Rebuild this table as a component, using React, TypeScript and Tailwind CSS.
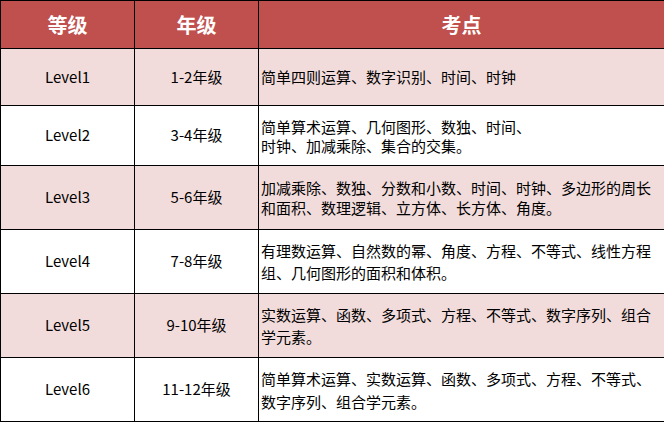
const rows = [
  { level: 'Level1', grade: '1-2年级', points: ['简单四则运算、数字识别、时间、时钟'], h: 'h-[57px]', bg: 'bg-[#f2dcdb]', lh: 'leading-[20px]' },
  { level: 'Level2', grade: '3-4年级', points: ['简单算术运算、几何图形、数独、时间、', '时钟、加减乘除、集合的交集。'], h: 'h-[60px]', bg: 'bg-white', lh: 'leading-[19px]' },
  { level: 'Level3', grade: '5-6年级', points: ['加减乘除、数独、分数和小数、时间、时钟、多边形的周长和面积、数理逻辑、立方体、长方体、角度。'], h: 'h-[64px]', bg: 'bg-[#f2dcdb]', lh: 'leading-[20px]' },
  { level: 'Level4', grade: '7-8年级', points: ['有理数运算、自然数的幂、角度、方程、不等式、线性方程组、几何图形的面积和体积。'], h: 'h-[64px]', bg: 'bg-white', lh: 'leading-[22px]' },
  { level: 'Level5', grade: '9-10年级', points: ['实数运算、函数、多项式、方程、不等式、数字序列、组合学元素。'], h: 'h-[64px]', bg: 'bg-[#f2dcdb]', lh: 'leading-[22px]' },
  { level: 'Level6', grade: '11-12年级', points: ['简单算术运算、实数运算、函数、多项式、方程、不等式、数字序列、组合学元素。'], h: 'h-[64px]', bg: 'bg-white', lh: 'leading-[23px]' },
];

const App = () => {
  return (
    <div
      className="w-[664px] h-[422px] bg-white text-black"
      style={{ fontFamily: '"Noto Sans CJK SC", "Noto Sans", sans-serif' }}
    >
      <table className="w-[664px] table-fixed border-collapse">
        <colgroup>
          <col className="w-[134px]" />
          <col className="w-[124px]" />
          <col className="w-[406px]" />
        </colgroup>
        <thead>
          <tr className="h-[48px] bg-[#c0504d] text-white">
            <th className="border border-black text-[20px] font-bold">等级</th>
            <th className="border border-black text-[20px] font-bold">年级</th>
            <th className="border border-black text-[20px] font-bold">考点</th>
          </tr>
        </thead>
        <tbody>
          {rows.map((row) => (
            <tr key={row.level} className={`${row.h} ${row.bg}`}>
              <td className="border border-black text-center text-[15px]">{row.level}</td>
              <td className="border border-black text-center text-[15px]">{row.grade}</td>
              <td className={`border border-black pl-[2px] pr-[4px] text-[15px] ${row.lh}`}>
                {row.points.map((p, i) => (
                  <div key={i}>{p}</div>
                ))}
              </td>
            </tr>
          ))}
        </tbody>
      </table>
    </div>
  );
};

export default App;
